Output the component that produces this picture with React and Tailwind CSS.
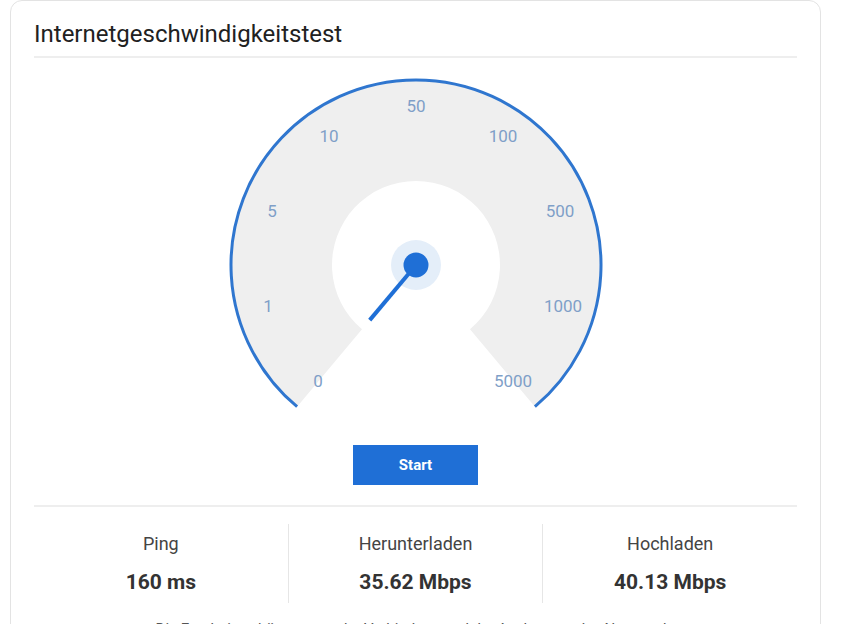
import React from 'react';

const CX = 200;
const CY = 195;

const pt = (r, deg) => {
  const a = (deg * Math.PI) / 180;
  return [CX + r * Math.sin(a), CY - r * Math.cos(a)];
};

const arcPath = (r, from, to) => {
  const [x1, y1] = pt(r, from);
  const [x2, y2] = pt(r, to);
  return `M ${x1} ${y1} A ${r} ${r} 0 1 1 ${x2} ${y2}`;
};

const bandPath = (rIn, rOut, from, to) => {
  const [ox1, oy1] = pt(rOut, from);
  const [ox2, oy2] = pt(rOut, to);
  const [ix2, iy2] = pt(rIn, to);
  const [ix1, iy1] = pt(rIn, from);
  return `M ${ox1} ${oy1} A ${rOut} ${rOut} 0 1 1 ${ox2} ${oy2} L ${ix2} ${iy2} A ${rIn} ${rIn} 0 1 0 ${ix1} ${iy1} Z`;
};

// scale labels, placed by hand along the dial
const labels = [
  ['0', 102, 311],
  ['1', 52, 236],
  ['5', 56, 141],
  ['10', 113, 66],
  ['50', 200, 36],
  ['100', 287, 66],
  ['500', 344, 141],
  ['1000', 347, 236],
  ['5000', 297, 311],
];

const Gauge = () => {
  const [nx, ny] = pt(72, -140);
  return (
    <svg width="400" height="360" viewBox="0 0 400 360" className="block">
      <path d={bandPath(84, 185, -140, 140)} fill="#efefef" />
      <path d={arcPath(185, -140, 140)} fill="none" stroke="#2f76cf" strokeWidth="3" />
      {labels.map(([l, x, y]) => (
        <text
          key={l}
          x={x}
          y={y}
          textAnchor="middle"
          dominantBaseline="central"
          fill="#7f9fc8"
          fontSize="17"
          fontFamily="Roboto, sans-serif"
        >
          {l}
        </text>
      ))}
      <circle cx={CX} cy={CY} r="25" fill="#e4eef9" />
      <line x1={CX} y1={CY} x2={nx} y2={ny} stroke="#1f6fd6" strokeWidth="4" />
      <circle cx={CX} cy={CY} r="12.5" fill="#1f6fd6" />
    </svg>
  );
};

const Stat = ({ label, value, last }) => (
  <div className={`flex-1 flex flex-col items-center pt-[7px] ${last ? '' : 'border-r border-[#e6e6e6]'}`}>
    <span className="text-[18px] leading-[26px] text-[#444]">{label}</span>
    <span className="mt-[12px] text-[21px] leading-[26px] font-bold text-[#333]">{value}</span>
  </div>
);

export default function App() {
  return (
    <div className="w-full min-h-screen bg-white font-['Roboto',sans-serif] overflow-hidden h-[624px]">
      <div className="ml-[10px] w-[811px] border border-[#e3e3e3] rounded-xl px-[23px] pb-10">
        <h1 className="pt-[17px] pb-[6px] text-[24px] leading-[32px] text-[#212121] border-b-2 border-[#eeeeee]">
          Internetgeschwindigkeitstest
        </h1>
        <div className="flex justify-center mt-[12px]">
          <Gauge />
        </div>
        <div className="flex justify-center mt-[15px]">
          <button className="w-[125px] h-[40px] bg-[#1f6fd6] text-white text-[15px] font-bold">
            Start
          </button>
        </div>
        <div className="mt-[20px] border-t-2 border-[#eeeeee]">
          <div className="flex mt-[17px] h-[79px]">
            <Stat label="Ping" value="160 ms" />
            <Stat label="Herunterladen" value="35.62 Mbps" />
            <Stat label="Hochladen" value="40.13 Mbps" last />
          </div>
          <p className="mt-[14px] text-center text-[15px] leading-[24px] text-[#555]">
            Die Ergebnisse hängen von der Verbindung und der Auslastung des Netzes ab.
          </p>
        </div>
      </div>
    </div>
  );
}
